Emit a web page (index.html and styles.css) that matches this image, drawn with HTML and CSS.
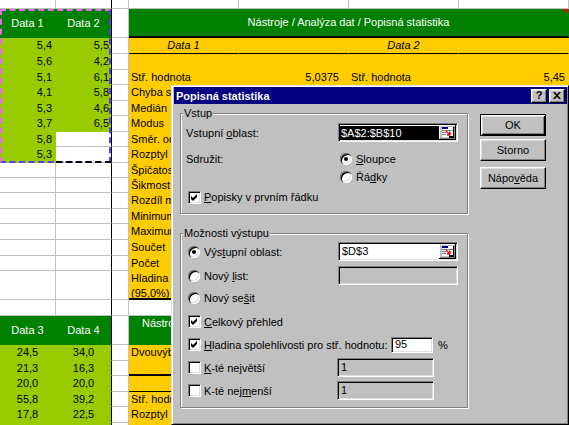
FILE: index.html
```html
<!DOCTYPE html>
<html lang="cs">
<head>
<meta charset="utf-8">
<title>Popisná statistika</title>
<link rel="stylesheet" href="styles.css">
</head>
<body>
<div class="sheet">
  <!-- row 1 -->
  <div class="c"></div><div class="c b"></div><div class="c"></div><div class="c"></div><div class="c"></div><div class="c"></div><div class="c"></div>
  <!-- row 2 -->
  <div class="c g">Data 1</div><div class="c g b">Data 2</div><div class="c"></div>
  <div class="c g span4 bb2">Nástroje / Analýza dat / Popisná statistika<span class="tri"></span></div>
  <!-- row 3 -->
  <div class="c l">5,4</div><div class="c l b">5,5</div><div class="c"></div>
  <div class="c y it bb1">Data 1</div><div class="c y bb1"></div><div class="c y it bb1">Data 2</div><div class="c y bb1"></div>
  <!-- row 4 -->
  <div class="c l">5,6</div><div class="c l b">4,2</div><div class="c"></div><div class="c y span4"></div>
  <!-- row 5 -->
  <div class="c l">5,1</div><div class="c l b">6,1</div><div class="c"></div>
  <div class="c y">Stř. hodnota</div><div class="c y num e">5,0375</div><div class="c y">Stř. hodnota</div><div class="c y num">5,45</div>
  <!-- rows 6-18 -->
  <div class="c l">4,1</div><div class="c l b">5,8</div><div class="c"></div><div class="c y">Chyba stř. hodnoty</div><div class="c y span3 rows13 bb2"></div>
  <div class="c l">5,3</div><div class="c l b">4,6</div><div class="c"></div><div class="c y">Medián</div>
  <div class="c l">3,7</div><div class="c l b">6,5</div><div class="c"></div><div class="c y">Modus</div>
  <div class="c l">5,8</div><div class="c b"></div><div class="c"></div><div class="c y">Směr. odchylka</div>
  <div class="c l">5,3</div><div class="c b"></div><div class="c"></div><div class="c y">Rozptyl výběru</div>
  <div class="c"></div><div class="c b"></div><div class="c"></div><div class="c y">Špičatost</div>
  <div class="c"></div><div class="c b"></div><div class="c"></div><div class="c y">Šikmost</div>
  <div class="c"></div><div class="c b"></div><div class="c"></div><div class="c y">Rozdíl max-min</div>
  <div class="c"></div><div class="c b"></div><div class="c"></div><div class="c y">Minimum</div>
  <div class="c"></div><div class="c b"></div><div class="c"></div><div class="c y">Maximum</div>
  <div class="c"></div><div class="c b"></div><div class="c"></div><div class="c y">Součet</div>
  <div class="c"></div><div class="c b"></div><div class="c"></div><div class="c y">Počet</div>
  <div class="c"></div><div class="c b"></div><div class="c"></div><div class="c y two bb2">Hladina spolehl.<br>(95,0%)</div>
  <!-- row 19 -->
  <div class="c"></div><div class="c b"></div><div class="c"></div><div class="c"></div><div class="c"></div><div class="c"></div><div class="c"></div>
  <!-- row 20 -->
  <div class="c g">Data 3</div><div class="c g b">Data 4</div><div class="c"></div>
  <div class="c g span4 top">Nástroje / Analýza dat</div>
  <!-- rows 21-26 -->
  <div class="c lc">24,5</div><div class="c lc b">34,0</div><div class="c"></div><div class="c y">Dvouvýběrový t-test</div><div class="c y span3 rows6"></div>
  <div class="c lc">21,3</div><div class="c lc b">16,3</div><div class="c"></div><div class="c y bb2"></div>
  <div class="c lc">20,0</div><div class="c lc b">20,0</div><div class="c"></div><div class="c y bb1"></div>
  <div class="c lc">55,8</div><div class="c lc b">39,2</div><div class="c"></div><div class="c y">Stř. hodnota</div>
  <div class="c lc">17,8</div><div class="c lc b">22,5</div><div class="c"></div><div class="c y">Rozptyl</div>
  <div class="c lc"></div><div class="c lc b"></div><div class="c"></div><div class="c y"></div>

  <div class="ants"></div>
  <div class="ants2"></div>
</div>

<div class="dlg">
  <div class="title">
    <span>Popisná statistika</span>
    <div class="capbtns">
      <span class="cap">?</span>
      <span class="cap"><svg width="8" height="7" viewBox="0 0 8 7"><path d="M0 0h2l2 2.3 2-2.3h2L5 3.5 8 7H6L4 4.7 2 7H0l3-3.5z" fill="#000"/></svg></span>
    </div>
  </div>
  <div class="dbody">
    <div class="groups">
      <div class="group g1">
        <span class="glabel">Vstup</span>
        <div class="row mt9">
          <span class="lab">Vstupní <u>o</u>blast:</span>
          <div class="fld w120"><span class="sel">$A$2:$B$10</span><svg class="refbtn" width="17" height="15" viewBox="0 0 17 15"><rect width="17" height="15" fill="#c0c0c0"/><path d="M0 0h16v1H1v13H0z" fill="#fff"/><path d="M16 0h1v15H0v-1h16z" fill="#000"/><path d="M15 1h1v13H1v-1h14z" fill="#808080"/><rect x="3" y="2" width="11" height="10" fill="#fff"/><rect x="3" y="2" width="6" height="2" fill="#000080"/><path d="M3 5.5h11M3 7.5h4M3 9.5h4M10.5 5v7" stroke="#808080"/><path d="M7 6l4 4M11 10V7M11 10H8" stroke="#f00" stroke-width="1.4"/><rect x="10" y="11" width="5" height="2" fill="#000"/><rect x="14" y="2" width="1" height="11" fill="#000"/></svg></div>
        </div>
        <div class="row h18 mt8">
          <span class="lab">Sdružit:</span>
          <span class="opt"><i class="rad on"></i><span><u>S</u>loupce</span></span>
        </div>
        <div class="row h18">
          <span class="lab"></span>
          <span class="opt"><i class="rad"></i><span>Řá<u>d</u>ky</span></span>
        </div>
        <div class="row h18 mt2">
          <span class="opt"><i class="chk"><svg width="9" height="9" viewBox="0 0 9 9"><path d="M1 3l2 2 4-4v3L3 8 1 6z" fill="#000"/></svg></i><span><u>P</u>opisky v prvním řádku</span></span>
        </div>
      </div>

      <div class="group g2">
        <span class="glabel">Možnosti výstupu</span>
        <div class="row mt8">
          <span class="opt w150"><i class="rad on"></i><span>Výs<u>t</u>upní oblast:</span></span>
          <div class="fld w120"><span class="val">$D$3</span><svg class="refbtn" width="17" height="15" viewBox="0 0 17 15"><rect width="17" height="15" fill="#c0c0c0"/><path d="M0 0h16v1H1v13H0z" fill="#fff"/><path d="M16 0h1v15H0v-1h16z" fill="#000"/><path d="M15 1h1v13H1v-1h14z" fill="#808080"/><rect x="3" y="2" width="11" height="10" fill="#fff"/><rect x="3" y="2" width="6" height="2" fill="#000080"/><path d="M3 5.5h11M3 7.5h4M3 9.5h4M10.5 5v7" stroke="#808080"/><path d="M7 6l4 4M11 10V7M11 10H8" stroke="#f00" stroke-width="1.4"/><rect x="10" y="11" width="5" height="2" fill="#000"/><rect x="14" y="2" width="1" height="11" fill="#000"/></svg></div>
        </div>
        <div class="row mt5">
          <span class="opt w150"><i class="rad"></i><span>Nový <u>l</u>ist:</span></span>
          <div class="fld w120 dis"></div>
        </div>
        <div class="row mt3">
          <span class="opt"><i class="rad"></i><span>Nový se<u>š</u>it</span></span>
        </div>
        <div class="row mt5">
          <span class="opt"><i class="chk"><svg width="9" height="9" viewBox="0 0 9 9"><path d="M1 3l2 2 4-4v3L3 8 1 6z" fill="#000"/></svg></i><span><u>C</u>elkový přehled</span></span>
        </div>
        <div class="row mt4">
          <span class="opt w203"><i class="chk"><svg width="9" height="9" viewBox="0 0 9 9"><path d="M1 3l2 2 4-4v3L3 8 1 6z" fill="#000"/></svg></i><span><u>H</u>ladina spolehlivosti pro stř. hodnotu:</span></span>
          <div class="fld w42 h16"><span class="val">95</span></div>
          <span class="pct">%</span>
        </div>
        <div class="row mt4">
          <span class="opt w149"><i class="chk"></i><span><u>K</u>-té největší</span></span>
          <div class="fld w97 dis"><span class="val">1</span></div>
        </div>
        <div class="row mt4">
          <span class="opt w149"><i class="chk"></i><span>K-té nej<u>m</u>enší</span></span>
          <div class="fld w97 dis"><span class="val">1</span></div>
        </div>
      </div>
    </div>

    <div class="btns">
      <div class="btn def">OK</div>
      <div class="btn s1">Storno</div>
      <div class="btn s2"><span>Nápo<u>v</u>ěda</span></div>
    </div>
  </div>
</div>
</body>
</html>
```

FILE: styles.css
```css
* { box-sizing: border-box; }
html, body { margin: 0; padding: 0; background: #fff; }
body {
  width: 569px;
  height: 425px;
  overflow: hidden;
  position: relative;
  font: 11px "Liberation Sans", Arial, sans-serif;
  color: #000;
}

/* ---------- spreadsheet ---------- */
.sheet {
  position: relative;
  display: grid;
  grid-template-columns: 56px 56px 17px 110px 110px 110px 110px;
  grid-template-rows: 9px 29px 16px 16px 15px 16px 15px 16px 15px 16px 15px 15px 16px 15px 16px 16px 15px 29px 16px 29px 16px 15px 16px 15px 16px 20px;
}
.c {
  position: relative;
  display: flex;
  align-items: center;
  padding: 0 2px;
  white-space: nowrap;
  overflow: hidden;
  line-height: 13px;
  border-right: 1px solid #c0c0c0;
  border-bottom: 1px solid #c0c0c0;
}
.g { background: #008000; border-color: #008000; color: #fff; justify-content: center; }
.l { background: #99cc00; border-color: #99cc00; justify-content: flex-end; padding-right: 3px; }
.lc { background: #99cc00; border-color: #99cc00; justify-content: center; }
.y { background: #ffcc00; border-color: #ffcc00; }
.b { border-right-color: #000; }
.l.b { padding-right: 2px; }
.span4 { grid-column: span 4; }
.span3 { grid-column: span 3; }
.rows13 { grid-row: span 13; }
.rows6 { grid-row: span 6; }
.bb2 { border-bottom: 2px solid #000; }
.bb1 { border-bottom-color: #000; }
.it { font-style: italic; justify-content: center; }
.num { justify-content: flex-end; padding-right: 3px; }
.num.e { padding-right: 9px; }
.two { display: block; line-height: 15px; white-space: nowrap; }
.top { align-items: flex-start; justify-content: flex-start; padding: 1px 0 0 13px; }
.tri {
  position: absolute;
  top: 0;
  right: 0;
  width: 0;
  height: 0;
  border-top: 5px solid #f00;
  border-left: 5px solid transparent;
}
.ants {
  position: absolute;
  left: 0;
  top: 9px;
  width: 111px;
  height: 154px;
  border: 2px dashed;
  border-color: #e46ee8 #5a3cf4 #5a3cf4 #e46ee8;
  pointer-events: none;
}
.ants2 {
  position: absolute;
  left: 56px;
  top: 161px;
  width: 55px;
  height: 2px;
  border-top: 2px dashed #000;
  pointer-events: none;
}

/* ---------- dialog ---------- */
.dlg {
  position: absolute;
  left: 171px;
  top: 85px;
  width: 398px;
  height: 340px;
  background: #c0c0c0;
  border: 1px solid;
  border-color: #dfdfdf #000 #000 #dfdfdf;
  box-shadow: inset 1px 1px #fff, inset -1px -1px #808080;
  padding: 1px 1px 0 2px;
  display: flex;
  flex-direction: column;
}
.title {
  height: 17px;
  flex: none;
  background: #000080;
  color: #fff;
  font-weight: bold;
  display: flex;
  align-items: center;
  justify-content: space-between;
  padding: 0 2px;
}
.capbtns { display: flex; gap: 2px; }
.cap {
  width: 16px;
  height: 14px;
  background: #c0c0c0;
  border: 1px solid;
  border-color: #fff #000 #000 #fff;
  box-shadow: inset -1px -1px #808080, inset 1px 1px #dfdfdf;
  display: flex;
  align-items: center;
  justify-content: center;
  color: #000;
  font-weight: bold;
  font-size: 11px;
  line-height: 1;
}

.dbody { display: flex; padding: 9px 0 0 6px; }
.groups { width: 288px; flex: none; }
.group {
  position: relative;
  border: 1px solid #808080;
  box-shadow: inset 1px 1px #fff, 1px 1px #fff;
  padding: 0 0 0 5px;
}
.g1 { height: 101px; }
.g2 { height: 175px; margin-top: 19px; }
.glabel {
  position: absolute;
  top: -7px;
  left: 2px;
  background: #c0c0c0;
  padding: 0 1px;
  line-height: 13px;
}

.row { display: flex; align-items: center; height: 19px; }
.h18 { height: 18px; }
.mt2 { margin-top: 2px; }
.mt3 { margin-top: 3px; }
.mt4 { margin-top: 4px; }
.mt5 { margin-top: 5px; }
.mt8 { margin-top: 8px; }
.mt9 { margin-top: 9px; }
.lab { width: 152px; flex: none; white-space: nowrap; }
.opt { display: flex; align-items: center; margin-left: 2px; flex: none; white-space: nowrap; }
.w150 { width: 150px; }
.w149 { width: 149px; }
.w203 { width: 203px; }

.rad {
  position: relative;
  width: 12px;
  height: 12px;
  border-radius: 50%;
  background: #fff;
  box-shadow: inset 1px 1px 0 #808080, inset 2px 2px 0 #000, inset -1px -1px 0 #fff, inset -2px -2px 0 #dfdfdf;
  margin-right: 4px;
  flex: none;
}
.rad.on::after {
  content: "";
  position: absolute;
  left: 4px;
  top: 4px;
  width: 4px;
  height: 4px;
  border-radius: 50%;
  background: #000;
}
.chk {
  width: 13px;
  height: 13px;
  flex: none;
  margin-right: 3px;
  background: #fff;
  border: 1px solid;
  border-color: #808080 #fff #fff #808080;
  box-shadow: inset 1px 1px #000, inset -1px -1px #dfdfdf;
  padding: 1px;
  display: flex;
}
.chk svg { display: block; }

.fld {
  flex: none;
  height: 19px;
  border: 1px solid;
  border-color: #808080 #fff #fff #808080;
  box-shadow: inset 1px 1px #000, inset -1px -1px #dfdfdf;
  background: #fff;
  display: flex;
  align-items: center;
  padding: 0 1px;
}
.w120 { width: 120px; }
.w97 { width: 97px; }
.w42 { width: 42px; }
.h16 { height: 16px; }
.dis { background: #c0c0c0; }
.val { flex: 1; padding-left: 2px; line-height: 13px; }
.sel {
  flex: 1;
  background: #000;
  color: #fff;
  height: 14px;
  line-height: 14px;
  padding-left: 1px;
}
.refbtn { display: block; flex: none; }
.pct { margin-left: 5px; }

.btns { display: flex; flex-direction: column; margin-left: 12px; padding-top: 1px; }
.btn {
  width: 66px;
  height: 22px;
  background: #c0c0c0;
  border: 1px solid;
  border-color: #fff #000 #000 #fff;
  box-shadow: inset -1px -1px #808080, inset 1px 1px #dfdfdf;
  display: flex;
  align-items: center;
  justify-content: center;
}
.btn.def {
  border-color: #000;
  box-shadow: inset 1px 1px #fff, inset -1px -1px #000, inset 2px 2px #dfdfdf, inset -2px -2px #808080;
}
.s1 { margin-top: 3px; }
.s2 { margin-top: 6px; }
```
